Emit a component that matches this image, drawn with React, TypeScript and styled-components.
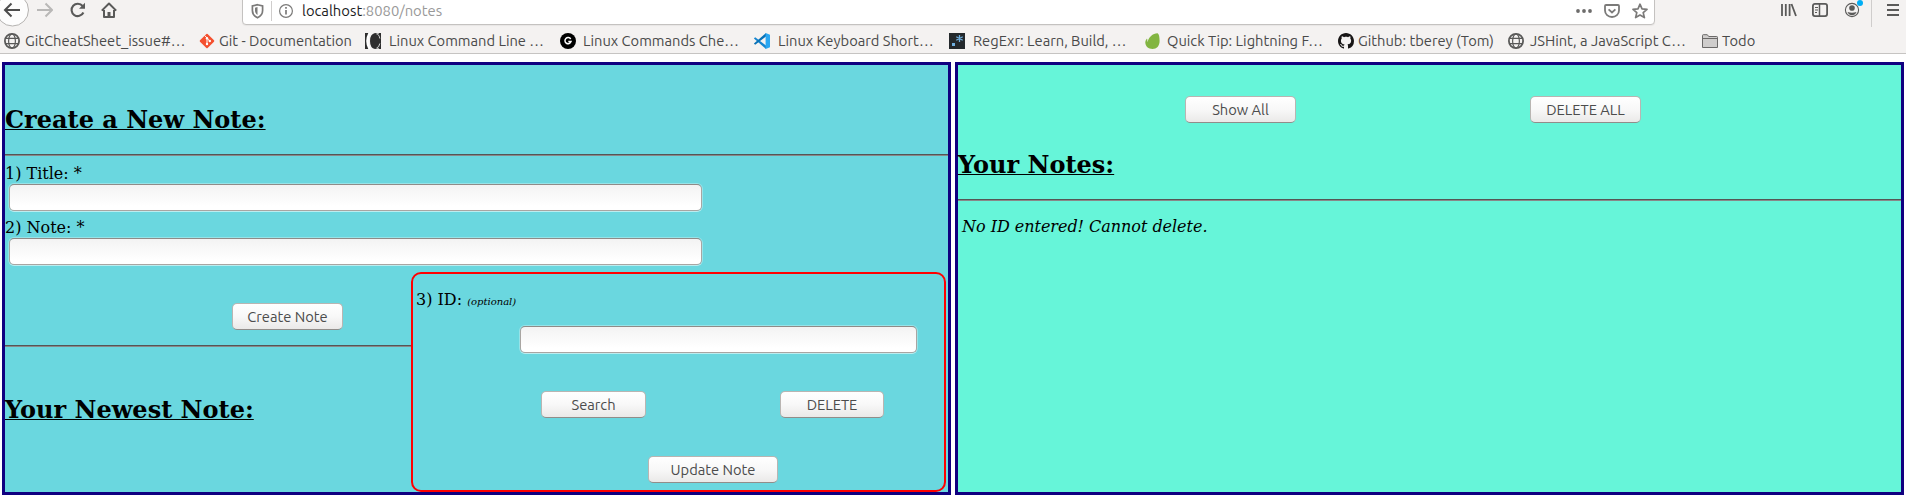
import React from 'react';
import styled, { createGlobalStyle } from 'styled-components';

const GlobalStyle = createGlobalStyle`
  * { box-sizing: border-box; }
  body { margin: 0; background: #fff; overflow: hidden; }
`;

const uiFont = `Ubuntu, 'Noto Sans', sans-serif`;

const Page = styled.div`
  width: 1906px;
  height: 498px;
  overflow: hidden;
  font-family: 'DejaVu Serif', serif;
  font-size: 16px;
  line-height: 19px;
  color: #000;
`;

const Chrome = styled.header`
  height: 54px;
  background: #f4f2f1;
  border-bottom: 1px solid #c6c4c2;
  font-family: ${uiFont};
  overflow: hidden;
`;

const NavBar = styled.div`
  display: flex;
  align-items: flex-start;
  height: 27px;
`;

const Icon = styled.svg<{ $ml?: number; $mt?: number }>`
  display: block;
  flex: none;
  margin-left: ${p => p.$ml ?? 0}px;
  margin-top: ${p => p.$mt ?? 0}px;
`;

const AddressBar = styled.div`
  display: flex;
  width: 1413px;
  height: 29px;
  margin: -4px 0 0 125px;
  padding-top: 4px;
  background: #fff;
  border: 1px solid #c4c2c0;
  border-radius: 4px;
  box-shadow: 0 1px 1px rgba(0, 0, 0, 0.05);
`;

const Divider = styled.span<{ $ml: number; $h: number }>`
  width: 1px;
  height: ${p => p.$h}px;
  margin-left: ${p => p.$ml}px;
  background: #cfcdcc;
`;

const Address = styled.span`
  width: 1282px;
  padding-left: 8px;
  font-size: 14.8px;
  line-height: 20px;
  white-space: nowrap;
  color: #999;
  b { font-weight: 400; color: #1c1c1e; }
`;

const Bookmarks = styled.nav`
  display: flex;
  height: 26px;
  padding: 4px 0 0 4px;
`;

const Bookmark = styled.a<{ $w: number; $gap: number }>`
  display: flex;
  flex: none;
  align-items: center;
  width: ${p => p.$w}px;
  height: 20px;
  gap: ${p => p.$gap}px;
  font-size: 14.7px;
  line-height: 20px;
  white-space: nowrap;
  color: #4a4a4a;
`;

const Main = styled.main`
  display: flex;
  gap: 4px;
  padding: 8px 2px 0;
`;

const Panel = styled.section<{ $bg: string; $top: number }>`
  width: 949px;
  height: 433px;
  padding-top: ${p => p.$top}px;
  border: 3px solid #100080;
  background: ${p => p.$bg};
`;

const Heading = styled.h2<{ $mt?: number }>`
  margin: ${p => p.$mt ?? 0}px 0 0;
  font-size: 24px;
  line-height: 29px;
  font-weight: 700;
  text-decoration: underline;
  text-decoration-thickness: 1px;
  text-underline-offset: 1px;
  white-space: nowrap;
`;

const Rule = styled.hr<{ $mt: number }>`
  height: 2px;
  margin: ${p => p.$mt}px 0 0;
  border: 0;
  border-top: 1px solid #555;
  border-bottom: 1px solid #888;
`;

const Label = styled.label<{ $mt: number; $ml?: number }>`
  display: block;
  margin-top: ${p => p.$mt}px;
  margin-left: ${p => p.$ml ?? 0}px;
  small { font-size: 10px; font-style: italic; line-height: 0; }
`;

const Field = styled.input<{ $w: number; $ml: number; $mt: number }>`
  display: block;
  width: ${p => p.$w}px;
  height: 27px;
  margin: ${p => p.$mt}px 0 0 ${p => p.$ml}px;
  padding: 0 6px;
  border: 1px solid #a9a5a2;
  border-top-color: #8f8b88;
  border-radius: 5px;
  background: linear-gradient(#f3f3f3, #fff 85%);
  box-shadow: 0 0 0 1px rgba(255, 255, 255, 0.3), 0 1px 0 rgba(255, 255, 255, 0.35);
  outline: none;
`;

const Button = styled.button<{ $w: number }>`
  flex: none;
  width: ${p => p.$w}px;
  height: 27px;
  padding: 0;
  border: 1px solid #b9b5b2;
  border-bottom-color: #918d8a;
  border-radius: 5px;
  background: linear-gradient(#fff, #f8f8f8 50%, #eae9e8);
  font-family: ${uiFont};
  font-size: 14.7px;
  line-height: 24px;
  color: #4c4c4c;
`;

const Buttons = styled.div<{ $mt?: number; $pl: number; $gap?: number }>`
  display: flex;
  gap: ${p => p.$gap ?? 0}px;
  margin-top: ${p => p.$mt ?? 0}px;
  padding-left: ${p => p.$pl}px;
`;

const Split = styled.div`
  display: flex;
  margin-top: 7px;
`;

const Newest = styled.div`
  width: 406px;
  padding-top: 31px;
`;

const IdBox = styled.div`
  width: 535px;
  height: 220px;
  padding-left: 4px;
  padding-top: 16px;
  border: 2px solid #f00;
  border-radius: 10px;
`;

const Message = styled.p`
  margin: 16px 0 0 4px;
  font-style: italic;
  letter-spacing: -0.03px;
`;

const Globe = () => (
  <Icon width="16" height="16" viewBox="0 0 16 16" fill="none" stroke="#5a5a59" strokeWidth="1.5">
    <circle cx="8" cy="8" r="7.1" strokeWidth="1.8" />
    <ellipse cx="8" cy="8" rx="3.4" ry="7" strokeWidth="1.2" />
    <path d="M1.8 5.4h12.4M1.8 10.6h12.4" strokeWidth="1.2" />
  </Icon>
);
const Git = () => (
  <Icon width="16" height="16" viewBox="0 0 16 16">
    <rect x="2.6" y="2.6" width="10.8" height="10.8" rx=".9" transform="rotate(45 8 8)" fill="#f4502f" />
    <path d="M5.8 2.6L8 5v6M8.2 5.4l2.5 2.6" stroke="#fff" strokeWidth="1" fill="none" />
    <circle cx="8" cy="5.2" r="1.2" fill="#fff" /><circle cx="8" cy="11" r="1.2" fill="#fff" /><circle cx="10.8" cy="8" r="1.2" fill="#fff" />
  </Icon>
);
const CommandLine = () => (
  <Icon width="16" height="16" viewBox="0 0 16 16">
    <path d="M0 0h5Q2.200 3 2.200 8T5 16H0z" fill="#2e2e2e" />
    <path d="M3.300 0H5.500Q3.500 4 3.500 8t2 8H3.300Q1.200 12 1.200 8T3.300 0z" fill="#fff" />
    <path d="M16 0v16h-2l-.8-1Q12 16 10 16 5 15 5 8T10 0q2 0 3.200 1L14 0z" fill="#2e2e2e" />
    <path d="M14.800 5.500Q14.200 1.200 11.500 1M14.800 10.500Q14.200 14.500 11.500 15" fill="none" stroke="#fff" strokeWidth=".8" />
  </Icon>
);
const GBadge = () => (
  <Icon width="16" height="16" viewBox="0 0 16 16">
    <circle cx="8" cy="8" r="8" fill="#000" />
    <path d="M10.700 6A3.100 3.100 0 1 0 11 8.600H8.300" fill="none" stroke="#fff" strokeWidth="1.500" />
  </Icon>
);
const VSCode = () => (
  <Icon width="16" height="16" viewBox="0 0 16 16">
    <path d="M0 5.300l1.200-1L12 12.500V16L.2 5.800z" fill="#1585cf" />
    <path d="M0 10.700l1.200 1L12 3.500V0L.2 10.200z" fill="#0872b8" />
    <path d="M11.600 0L16 1.800v12.400L11.600 16z" fill="#2aa7f2" />
  </Icon>
);
const RegExr = () => (
  <Icon width="16" height="16" viewBox="0 0 16 16">
    <path d="M0 0h16v16H0z" fill="#24292c" />
    <path d="M3 10h3v3H3z" fill="#70b0e0" />
    <path d="M10.500 2v7M7.300 3.700l6.400 3.600M13.700 3.700L7.300 7.300" stroke="#70b0e0" strokeWidth="1.300" />
  </Icon>
);
const Leaf = () => (
  <Icon width="16" height="16" viewBox="0 0 16 16">
    <path d="M12.600.3C14 1 14.600 4 14.600 8c0 5-3 8-7 8C3.500 16 .3 13.200.3 9.500c0-1.600.7-2.700 1.300-3.500.3-.4.8-.2.700.4-.1 1 .1 2 .5 2.700C3.200 4.500 8 .2 12.600.3z" fill="#82b541" />
  </Icon>
);
const GitHub = () => (
  <Icon width="16" height="16" viewBox="0 0 16 16">
    <path fill="#181616" d="M8 0C3.580 0 0 3.580 0 8c0 3.540 2.290 6.530 5.470 7.590.4.070.55-.17.55-.38 0-.19-.01-.82-.01-1.490-2.010.37-2.530-.49-2.690-.94-.09-.23-.48-.94-.82-1.130-.28-.15-.68-.52-.01-.53.63-.01 1.080.58 1.230.82.72 1.210 1.870.87 2.330.66.070-.52.28-.87.51-1.070-1.780-.2-3.640-.89-3.640-3.950 0-.87.31-1.590.82-2.150-.08-.2-.36-1.020.08-2.120 0 0 .67-.21 2.200.82.64-.18 1.320-.27 2-.27s1.360.09 2 .27c1.530-1.040 2.200-.82 2.200-.82.44 1.100.16 1.920.08 2.120.51.56.82 1.270.82 2.150 0 3.070-1.870 3.750-3.650 3.950.29.25.54.73.54 1.480 0 1.070-.01 1.930-.01 2.200 0 .21.15.46.55.38A8 8 0 0 0 16 8c0-4.420-3.580-8-8-8z" />
  </Icon>
);
const Folder = () => (
  <Icon width="16" height="16" viewBox="0 0 16 16" fill="#cfcdcc" stroke="#6b6968">
    <path d="M.5 14.500V2.500q0-.8.8-.8h4l1.400 1.800h8q.8 0 .8.800v10.200z" /><path d="M.5 5.500h15" />
  </Icon>
);

const bookmarks = [
  { label: 'GitCheatSheet_issue#…', icon: Globe, w: 195, gap: 5 },
  { label: 'Git - Documentation', icon: Git, w: 166, gap: 4 },
  { label: 'Linux Command Line …', icon: CommandLine, w: 195, gap: 8 },
  { label: 'Linux Commands Che…', icon: GBadge, w: 194, gap: 7 },
  { label: 'Linux Keyboard Short…', icon: VSCode, w: 195, gap: 8 },
  { label: 'RegExr: Learn, Build, …', icon: RegExr, w: 196, gap: 8 },
  { label: 'Quick Tip: Lightning F…', icon: Leaf, w: 193, gap: 6 },
  { label: 'Github: tberey (Tom)', icon: GitHub, w: 170, gap: 4 },
  { label: 'JSHint, a JavaScript C…', icon: Globe, w: 194, gap: 6 },
  { label: 'Todo', icon: Folder, w: 60, gap: 4 },
];

const BrowserChrome = () => (
  <Chrome>
    <NavBar>
      <Icon width="30" height="27" viewBox="0 0 30 27" fill="none">
        <circle cx="12.500" cy="10" r="16" fill="#fdfdfd" stroke="#b4b2b0" />
        <path d="M20 10H5M11.500 3.500L5 10l6.500 6.500" stroke="#4d4d4d" strokeWidth="2" />
      </Icon>
      <Icon $ml={7} $mt={2} width="16" height="16" viewBox="0 0 16 16" fill="none" stroke="#b9b8b7" strokeWidth="2">
        <path d="M0 8h15M8.500 1.500L15 8l-6.500 6.500" />
      </Icon>
      <Icon $ml={17} $mt={2} width="16" height="16" viewBox="0 0 16 16" fill="none" stroke="#5a5a59" strokeWidth="2.100">
        <path d="M12.600 4A6.200 6.200 0 1 0 13.400 10.500" /><path d="M15 .8v6H9z" fill="#5a5a59" stroke="none" />
      </Icon>
      <Icon $ml={15} $mt={2} width="16" height="16" viewBox="0 0 16 16" fill="none" stroke="#5a5a59" strokeWidth="2">
        <path d="M.8 8.600L8 1.500l7.200 7.100M3 8v7h10V8" strokeLinejoin="round" />
        <path d="M6.500 15v-5h3v5z" fill="#5a5a59" stroke="none" />
      </Icon>
      <AddressBar>
        <Icon $ml={8} $mt={2} width="13" height="16" viewBox="0 0 13 16">
          <path d="M6.500 1.700L11.600 3v4.500c0 3.200-1.800 5.700-5.100 7.200-3.300-1.500-5.100-4-5.100-7.200V3z" fill="none" stroke="#7b7a79" strokeWidth="1.700" />
          <path d="M6.500 4v8C4.800 10.800 4 9.300 4 7.300V4.700z" fill="#7b7a79" />
        </Icon>
        <Divider $ml={7} $h={20} />
        <Icon $ml={7} $mt={2} width="15" height="16" viewBox="0 0 15 16" fill="none" stroke="#7b7a79">
          <circle cx="7" cy="8" r="6.400" strokeWidth="1.200" /><path d="M7 7v4.500M7 4v1.700" strokeWidth="1.700" />
        </Icon>
        <Address><b>localhost</b>:8080/notes</Address>
        <Icon $mt={2} width="16" height="16" viewBox="0 0 16 16" fill="#6d6c6b">
          <circle cx="2" cy="8" r="1.900" /><circle cx="8" cy="8" r="1.900" /><circle cx="14" cy="8" r="1.900" />
        </Icon>
        <Icon $ml={12} $mt={2} width="16" height="16" viewBox="0 0 16 16" fill="none" stroke="#7b7a79" strokeWidth="1.800">
          <path d="M2 2h12q1 0 1 1v4.500a7 6.500 0 0 1-14 0V3q0-1 1-1z" /><path d="M4.600 6.300L8 9.500l3.400-3.200" />
        </Icon>
        <Icon $ml={12} $mt={2} width="16" height="16" viewBox="0 0 16 16" fill="none" stroke="#7b7a79" strokeWidth="1.700" strokeLinejoin="round">
          <path d="M8 1.200l2 4.600 5 .5-3.800 3.300 1.200 5L8 12l-4.400 2.600 1.200-5L1 6.300l5-.5z" />
        </Icon>
      </AddressBar>
      <Icon $ml={126} $mt={2} width="16" height="16" viewBox="0 0 16 16" fill="none" stroke="#5a5a59" strokeWidth="1.800">
        <path d="M1 2v12M4.800 2v12M8.600 2v12M10.500 2l4.500 12" />
      </Icon>
      <Icon $ml={15} $mt={2} width="16" height="16" viewBox="0 0 16 16" fill="none" stroke="#5a5a59">
        <rect x=".9" y="1.900" width="14.200" height="12.200" rx="2" strokeWidth="1.800" /><path d="M7.500 2v12" strokeWidth="1.500" /><path d="M3 5.500h3M3 8h3M3 10.500h2" />
      </Icon>
      <Icon $ml={16} width="20" height="18" viewBox="0 0 20 18">
        <circle cx="8" cy="10" r="6.600" fill="none" stroke="#5a5a59" strokeWidth="1.100" />
        <circle cx="8" cy="8" r="2.800" fill="#5a5a59" /><path d="M3.500 12q4.500 1.500 9 0-1.500 3.300-4.500 3.300T3.500 12z" fill="#5a5a59" />
        <circle cx="16" cy="3" r="3" fill="#00aef5" />
      </Icon>
      <Divider $ml={7} $h={27} />
      <Icon $ml={15} $mt={2} width="12" height="16" viewBox="0 0 12 16" stroke="#5a5a59" strokeWidth="2">
        <path d="M0 3h12M0 8h12M0 13h12" />
      </Icon>
    </NavBar>
    <Bookmarks>
      {bookmarks.map(({ label, icon: Glyph, w, gap }) => (
        <Bookmark key={label} $w={w} $gap={gap}><Glyph /><span>{label}</span></Bookmark>
      ))}
    </Bookmarks>
  </Chrome>
);

export default function App() {
  return (
    <Page>
      <GlobalStyle />
      <BrowserChrome />
      <Main>
        <Panel $bg="#6ad7df" $top={40}>
          <Heading>Create a New Note:</Heading>
          <Rule $mt={20} />
          <Label $mt={8} htmlFor="title">1) Title: *</Label>
          <Field id="title" $w={693} $ml={4} $mt={1} />
          <Label $mt={7} htmlFor="note">2) Note: *</Label>
          <Field id="note" $w={693} $ml={4} $mt={1} />
          <Split>
            <Newest>
              <Buttons $pl={227}><Button $w={111}>Create Note</Button></Buttons>
              <Rule $mt={15} />
              <Heading $mt={48}>Your Newest Note:</Heading>
            </Newest>
            <IdBox>
              <Label $mt={0} $ml={-1} htmlFor="note-id">3) ID: <small>(optional)</small></Label>
              <Field id="note-id" $w={397} $ml={103} $mt={17} />
              <Buttons $mt={38} $pl={124} $gap={134}>
                <Button $w={105}>Search</Button>
                <Button $w={104}>DELETE</Button>
              </Buttons>
              <Buttons $mt={38} $pl={231}><Button $w={130}>Update Note</Button></Buttons>
            </IdBox>
          </Split>
        </Panel>
        <Panel $bg="#66f5d9" $top={31}>
          <Buttons $pl={227} $gap={234}>
            <Button $w={111}>Show All</Button>
            <Button $w={111}>DELETE ALL</Button>
          </Buttons>
          <Heading $mt={27}>Your Notes:</Heading>
          <Rule $mt={20} />
          <Message>No ID entered! Cannot delete.</Message>
        </Panel>
      </Main>
    </Page>
  );
}
